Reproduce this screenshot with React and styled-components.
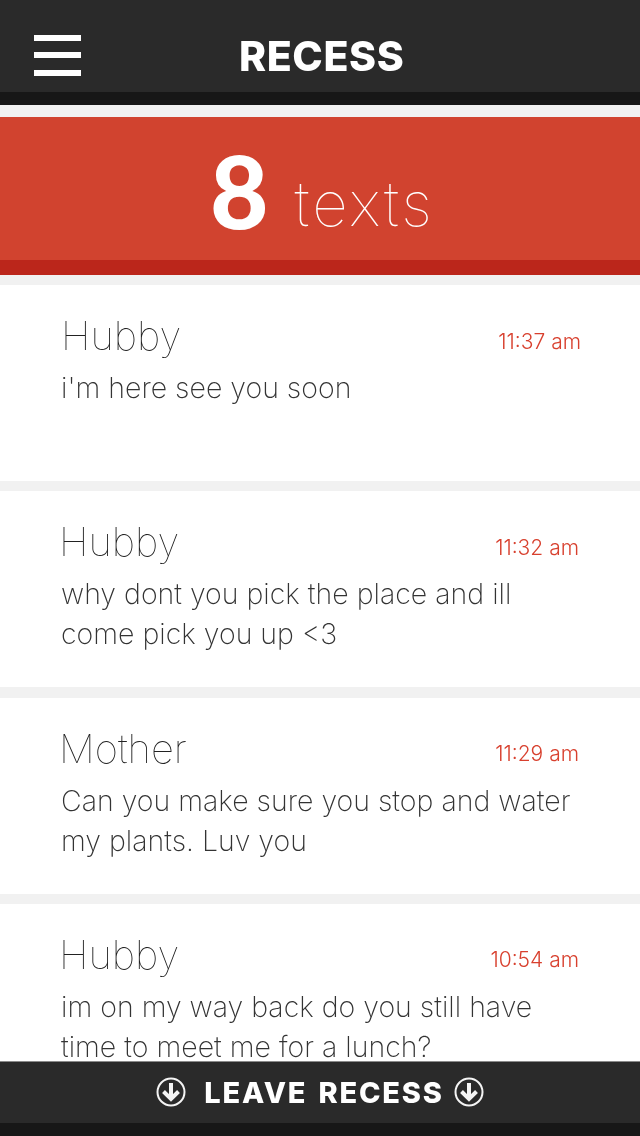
import styled, { createGlobalStyle } from 'styled-components'

const GlobalStyle = createGlobalStyle`
  html, body {
    margin: 0;
    padding: 0;
    background: #f1f1f1;
  }
`

const messages = [
  { name: 'Hubby', time: '11:37 am', text: "i'm here see you soon" },
  { name: 'Hubby', time: '11:32 am', text: 'why dont you pick the place and ill come pick you up <3', shifted: true },
  { name: 'Mother', time: '11:29 am', text: 'Can you make sure you stop and water my plants. Luv you', shifted: true },
  { name: 'Hubby', time: '10:54 am', text: 'im on my way back do you still have time to meet me for a lunch?', shifted: true },
]

const DownIcon = () => (
  <svg width='30' height='30' viewBox='0 0 30 30' fill='none' stroke='#f4f4f4'>
    <circle cx='15' cy='15' r='13.5' strokeWidth='2' />
    <path d='M15 6v16M7.5 14.5L15 22l7.5-7.5' strokeWidth='4' />
  </svg>
)

const App = () => {
  return (
    <Page>
      <GlobalStyle />
      <Header>
        <Burger>
          <span />
          <span />
          <span />
        </Burger>
        <Title>RECESS</Title>
      </Header>
      <Banner>
        <Count>8</Count>
        <CountLabel>texts</CountLabel>
      </Banner>
      <List>
        {messages.map((m) => (
          <Card key={m.time}>
            <CardTop $shifted={m.shifted}>
              <Name>{m.name}</Name>
              <Time>{m.time}</Time>
            </CardTop>
            <Message>{m.text}</Message>
          </Card>
        ))}
      </List>
      <Footer>
        <DownIcon />
        <LeaveText>LEAVE RECESS</LeaveText>
        <DownIcon />
      </Footer>
    </Page>
  )
}

const Page = styled.div`
  width: 640px;
  height: 1136px;
  display: flex;
  flex-direction: column;
  overflow: hidden;
  background: #f1f1f1;
  font-family: 'Inter', 'Liberation Sans', sans-serif;
  will-change: transform;
`

const Header = styled.header`
  flex: none;
  box-sizing: border-box;
  height: 105px;
  padding: 18px 34px 0;
  background: #2a2a2a;
  border-bottom: 13px solid #171717;
  display: flex;
  align-items: center;
`

const Burger = styled.div`
  width: 47px;
  height: 41px;
  display: flex;
  flex-direction: column;
  justify-content: space-between;
  span {
    display: block;
    height: 6px;
    background: #fff;
  }
`

const Title = styled.h1`
  margin: 3px 0 0 158px;
  font-size: 41px;
  font-weight: 800;
  line-height: 1;
  letter-spacing: 0.6px;
  color: #fff;
`

const Banner = styled.section`
  flex: none;
  box-sizing: border-box;
  height: 158px;
  margin-top: 12px;
  padding-left: 210px;
  background: #d1432f;
  border-bottom: 15px solid #bb261b;
  display: flex;
  align-items: flex-start;
`

const Count = styled.span`
  padding-top: 6px;
  font-family: 'Lato', sans-serif;
  font-size: 101px;
  font-weight: 900;
  line-height: 134px;
  color: #fff;
`

const CountLabel = styled.span`
  margin-left: 26px;
  padding-top: 49px;
  font-size: 62px;
  font-weight: 100;
  line-height: 75px;
  letter-spacing: 3px;
  color: #fff;
`

const List = styled.main`
  flex: 1;
  min-height: 0;
  margin-top: 10px;
  display: flex;
  flex-direction: column;
  gap: 10.33px;
  overflow: hidden;
`

const Card = styled.article`
  flex: none;
  box-sizing: border-box;
  height: 196px;
  padding: 25px 59px 0 61px;
  background: #fff;
`

const CardTop = styled.div`
  display: flex;
  justify-content: space-between;
  align-items: center;
  margin-left: ${(p) => (p.$shifted ? '-2px' : '0')};
  margin-right: ${(p) => (p.$shifted ? '2px' : '0')};
`

const Name = styled.span`
  font-size: 40px;
  font-weight: 100;
  line-height: 52px;
  color: #222;
`

const Time = styled.span`
  margin-top: 10px;
  font-size: 21px;
  font-weight: 300;
  color: #d8402e;
`

const Message = styled.p`
  margin: 6px 0 0;
  width: 520px;
  font-size: 28.5px;
  font-weight: 200;
  line-height: 40px;
  color: #333;
`

const Footer = styled.footer`
  flex: none;
  box-sizing: border-box;
  height: 75px;
  padding-bottom: 14px;
  background: linear-gradient(#2a2a2a 61px, #171717 61px);
  border-top: 1px solid #8a8a8a;
  display: flex;
  align-items: center;
  justify-content: center;
  gap: 10px;
`

const LeaveText = styled.span`
  margin-left: 8px;
  font-size: 29px;
  font-weight: 800;
  letter-spacing: 1.8px;
  word-spacing: 3px;
  color: #fff;
`

export default App
